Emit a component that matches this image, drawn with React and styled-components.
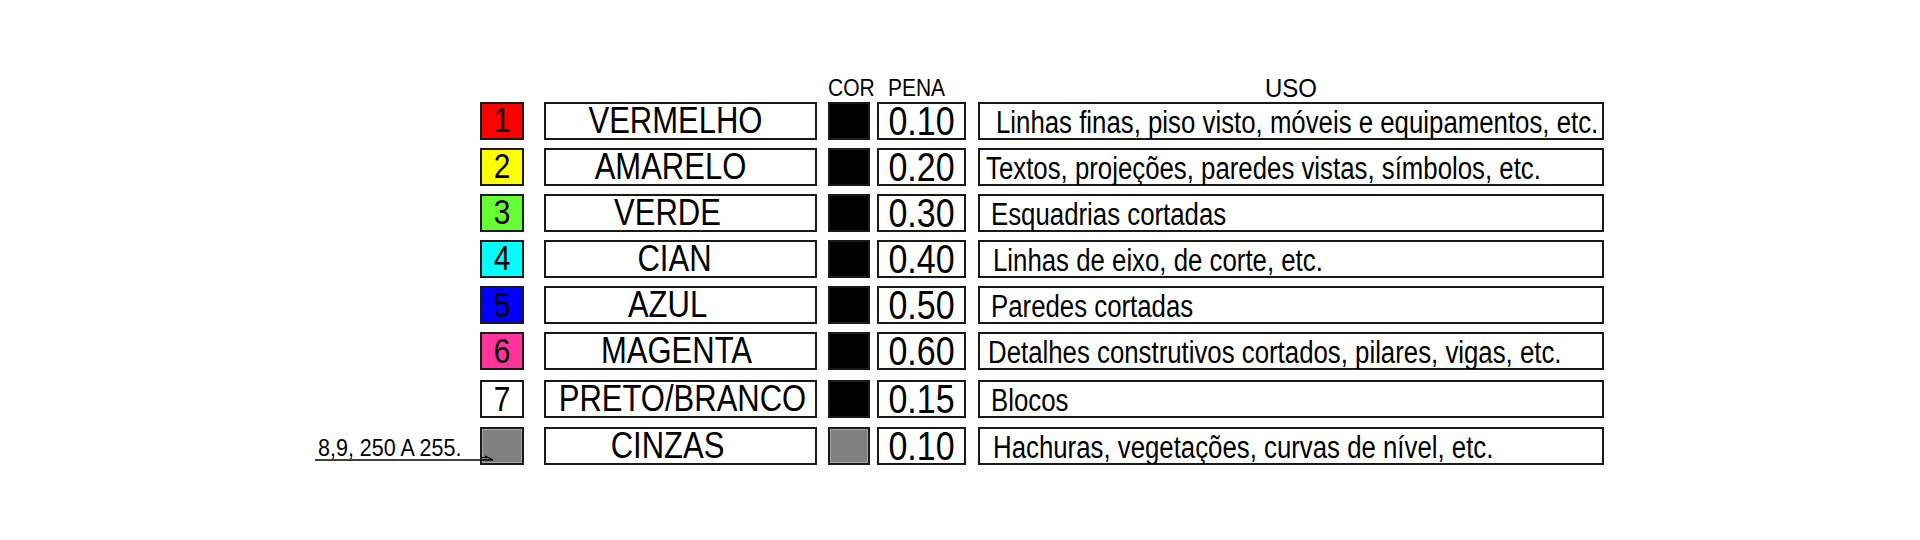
import React from "react";
import styled, { createGlobalStyle } from "styled-components";

const Global = createGlobalStyle`
  html, body { margin: 0; padding: 0; background: #fff; }
  body { font-family: "Liberation Sans", Arial, sans-serif; color: #000; }
`;

const Page = styled.div`
  width: 1920px;
  height: 540px;
  box-sizing: border-box;
  padding: 78px 0 0 315px;
  display: flex;
  flex-direction: column;
`;

const HeaderRow = styled.div`
  display: flex;
  height: 21px;
  margin-bottom: 3px;
  align-items: flex-end;
`;

const HeaderSpacer = styled.div`
  width: 502px;
  flex: none;
`;

const HeaderLabel = styled.div`
  flex: none;
  box-sizing: border-box;
  width: ${(p) => p.$w}px;
  margin-left: ${(p) => p.$ml}px;
  padding-right: ${(p) => p.$pr || 0}px;
  text-align: center;
  font-size: ${(p) => p.$fs || 21}px;
  line-height: 21px;
  white-space: nowrap;
`;

const Stretch = styled.span`
  display: inline-block;
  transform: scaleY(${(p) => p.$sy || 1.2});
  transform-origin: 50% ${(p) => p.$oy || 50}%;
`;

const Rows = styled.div`
  display: flex;
  flex-direction: column;
  gap: 8px;
`;

const Row = styled.div`
  display: flex;
  height: 38px;
  margin-top: ${(p) => p.$mt || 0}px;
`;

const Note = styled.div`
  position: relative;
  flex: none;
  width: 165px;
`;

const NoteText = styled.div`
  margin-top: 10px;
  padding-left: 3px;
  font-size: 21.5px;
  line-height: 22px;
  white-space: nowrap;
`;

const Leader = styled.svg`
  position: absolute;
  left: 0;
  top: 28px;
  z-index: 2;
  overflow: visible;
`;

const Box = styled.div`
  flex: none;
  box-sizing: border-box;
  height: 100%;
  border: 2px solid #1a1a1a;
  display: flex;
  align-items: center;
  white-space: nowrap;
`;

const NumBox = styled(Box)`
  width: 44px;
  justify-content: center;
  background: ${(p) => p.$bg};
  font-size: 30px;
  box-shadow: ${(p) => (p.$inset ? "inset 0 0 0 1px #a6a6a6" : "none")};
`;

const NameBox = styled(Box)`
  width: 273px;
  margin-left: 20px;
  justify-content: center;
  font-size: 31px;
  padding-left: ${(p) => Math.max(0, p.$shift * 2)}px;
  padding-right: ${(p) => Math.max(0, -p.$shift * 2)}px;
`;

const Swatch = styled(Box)`
  width: 42px;
  margin-left: 11px;
  background: ${(p) => p.$bg};
  box-shadow: ${(p) => (p.$inset ? "inset 0 0 0 1px #a6a6a6" : "none")};
`;

const PenBox = styled(Box)`
  width: 89px;
  margin-left: 7px;
  justify-content: center;
  font-size: 34px;
`;

const UseBox = styled(Box)`
  width: 626px;
  margin-left: 12px;
  font-size: 25.8px;
  padding-left: ${(p) => p.$indent}px;
  padding-top: 2px;
`;

const rows = [
  { n: "1", bg: "#ff0000", name: "VERMELHO", shift: -5, sw: "#000", pen: "0.10", use: "Linhas finas, piso visto, móveis e equipamentos, etc.", indent: 16 },
  { n: "2", bg: "#ffff00", name: "AMARELO", shift: -10, sw: "#000", pen: "0.20", use: "Textos, projeções, paredes vistas, símbolos, etc.", indent: 6 },
  { n: "3", bg: "#66ff33", name: "VERDE", shift: -13, sw: "#000", pen: "0.30", use: "Esquadrias cortadas", indent: 11 },
  { n: "4", bg: "#00ffff", name: "CIAN", shift: -6, sw: "#000", pen: "0.40", use: "Linhas de eixo, de corte, etc.", indent: 13 },
  { n: "5", bg: "#0000ff", name: "AZUL", shift: -13, sw: "#000", pen: "0.50", use: "Paredes cortadas", indent: 11 },
  { n: "6", bg: "#ff3399", name: "MAGENTA", shift: -4, sw: "#000", pen: "0.60", use: "Detalhes construtivos cortados, pilares, vigas, etc.", indent: 8 },
  { n: "7", bg: "#ffffff", name: "PRETO/BRANCO", shift: 2, sw: "#000", pen: "0.15", use: "Blocos", indent: 11, mt: 2 },
  { n: "", bg: "#808080", name: "CINZAS", shift: -13, sw: "#808080", pen: "0.10", use: "Hachuras, vegetações, curvas de nível, etc.", indent: 13, mt: 1, note: "8,9, 250 A 255.", grey: true },
];

export default function App() {
  return (
    <>
      <Global />
      <Page>
        <HeaderRow>
          <HeaderSpacer />
          <HeaderLabel $w={42} $ml={11}><Stretch $sy={1.1} $oy={100}>COR</Stretch></HeaderLabel>
          <HeaderLabel $w={89} $ml={7} $pr={10}><Stretch $sy={1.1} $oy={100}>PENA</Stretch></HeaderLabel>
          <HeaderLabel $w={626} $ml={12} $fs={24}><Stretch $sy={1.05} $oy={100}>USO</Stretch></HeaderLabel>
        </HeaderRow>
        <Rows>
          {rows.map((r, i) => (
            <Row key={i} $mt={r.mt}>
              <Note>
                {r.note && (
                  <>
                    <NoteText><Stretch $sy={1.12}>{r.note}</Stretch></NoteText>
                    <Leader width="180" height="10" viewBox="0 0 180 10">
                      <line x1="0" y1="5" x2="178" y2="5" stroke="#000" strokeWidth="1.5" />
                      <polyline points="170,1 178,5" fill="none" stroke="#000" strokeWidth="1.2" />
                      <polyline points="166,2.5 172,2.5" fill="none" stroke="#000" strokeWidth="1" />
                    </Leader>
                  </>
                )}
              </Note>
              <NumBox $bg={r.bg} $inset={r.grey}><Stretch $sy={1.15}>{r.n}</Stretch></NumBox>
              <NameBox $shift={r.shift}><Stretch>{r.name}</Stretch></NameBox>
              <Swatch $bg={r.sw} $inset={r.grey} />
              <PenBox><Stretch $sy={1.18}>{r.pen}</Stretch></PenBox>
              <UseBox $indent={r.indent}><Stretch $sy={1.22}>{r.use}</Stretch></UseBox>
            </Row>
          ))}
        </Rows>
      </Page>
    </>
  );
}
